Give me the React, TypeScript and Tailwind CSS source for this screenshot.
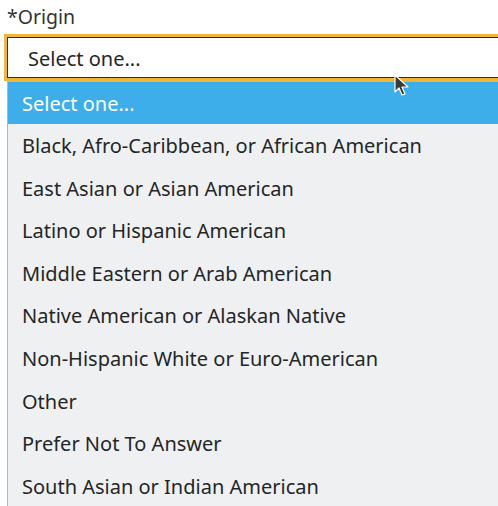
import React from "react";

const options = [
  "Black, Afro-Caribbean, or African American",
  "East Asian or Asian American",
  "Latino or Hispanic American",
  "Middle Eastern or Arab American",
  "Native American or Alaskan Native",
  "Non-Hispanic White or Euro-American",
  "Other",
  "Prefer Not To Answer",
  "South Asian or Indian American",
];

const Cursor = () => (
  <svg width="18" height="24" viewBox="0 0 18 24" className="absolute left-[393px] top-[74px]">
    <path d="M2 1 L2 18 L6 14 L9 21 L12 20 L9 13 L15 13 Z" fill="#3a3a3a" stroke="#ffffff" strokeWidth="1.2" strokeLinejoin="round" />
  </svg>
);

const App: React.FC = () => {
  return (
    <div
      className="relative w-[498px] h-[506px] overflow-hidden bg-white text-[#232627]"
      style={{ fontFamily: '"Noto Sans", "Open Sans", sans-serif' }}
    >
      <div className="pl-[7px] pt-[4px] text-[19.5px] leading-[26px] text-[#333333]">*Origin</div>
      <div className="ml-[4px] mt-[4px] w-[520px] h-[47px] border-[3px] border-[#f0b63a]">
        <div className="h-full border border-[#3b2a10] border-r-0 bg-white flex items-center pl-[20px] pt-[2px] text-[20px]">
          Select one...
        </div>
      </div>
      <ul className="absolute left-[7px] top-[81px] w-[520px] bg-[#eff0f1] border-l border-t border-[#b4b8bb] text-[20px]">
        <li className="h-[42px] leading-[42px] pl-[14px] pt-[1px] bg-[#3daee9] text-white">Select one...</li>
        {options.map((o) => (
          <li key={o} className="h-[42.6px] leading-[42.6px] pl-[14px] pt-[1px]">
            {o}
          </li>
        ))}
      </ul>
      <Cursor />
    </div>
  );
};

export default App;
